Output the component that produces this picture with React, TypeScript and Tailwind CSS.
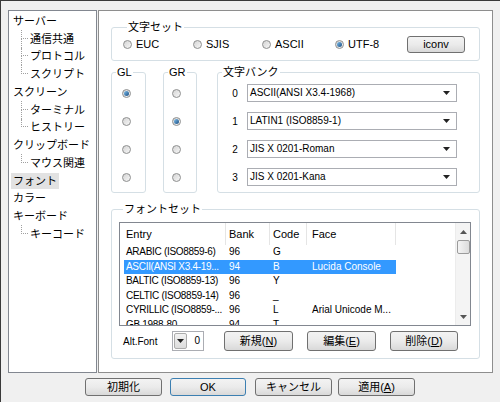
import React from "react";
import clsx from "clsx";

type TreeItem = { label: string; child?: boolean; last?: boolean; selected?: boolean };

const treeItems: TreeItem[] = [
  { label: "サーバー" },
  { label: "通信共通", child: true },
  { label: "プロトコル", child: true },
  { label: "スクリプト", child: true, last: true },
  { label: "スクリーン" },
  { label: "ターミナル", child: true },
  { label: "ヒストリー", child: true, last: true },
  { label: "クリップボード" },
  { label: "マウス関連", child: true, last: true },
  { label: "フォント", selected: true },
  { label: "カラー" },
  { label: "キーボード" },
  { label: "キーコード", child: true, last: true },
];

const banks = [
  "ASCII(ANSI X3.4-1968)",
  "LATIN1 (ISO8859-1)",
  "JIS X 0201-Roman",
  "JIS X 0201-Kana",
];

const fontRows = [
  { entry: "ARABIC (ISO8859-6)", bank: "96", code: "G", face: "" },
  { entry: "ASCII(ANSI X3.4-19...", bank: "94", code: "B", face: "Lucida Console", selected: true },
  { entry: "BALTIC (ISO8859-13)", bank: "96", code: "Y", face: "" },
  { entry: "CELTIC (ISO8859-14)", bank: "96", code: "_", face: "" },
  { entry: "CYRILLIC (ISO8859-...", bank: "96", code: "L", face: "Arial Unicode M..." },
  { entry: "GB 1988-80", bank: "94", code: "T", face: "" },
];

const Radio = ({ checked }: { checked?: boolean }) => (
  <span className="flex items-center justify-center w-[9px] h-[9px] shrink-0 rounded-full border border-[#8e8f8f] bg-linear-to-br from-[#d4d4d4] to-[#f7f7f7]">
    {checked && <span className="w-[5px] h-[5px] rounded-full bg-linear-to-br from-[#7fc0ee] to-[#1b4f82]" />}
  </span>
);

const Button = ({
  children,
  className,
  primary,
}: {
  children: React.ReactNode;
  className?: string;
  primary?: boolean;
}) => (
  <button
    className={clsx(
      "flex items-center justify-center rounded-[3px] border bg-linear-to-b from-[#f3f3f3] via-[#ebebeb] to-[#d9d9d9] text-[11px] leading-none text-black",
      primary ? "border-[#3c7fb1]" : "border-[#707070]",
      className
    )}
  >
    {children}
  </button>
);

const Arrow = () => (
  <svg width="7" height="4" viewBox="0 0 7 4">
    <path d="M0 0h7L3.5 4z" fill="#222" />
  </svg>
);

const App = () => {
  return (
    <div className="w-[500px] h-[402px] overflow-hidden bg-[#f0f0f0] border-t border-l border-[#3a3a3a] font-['Liberation_Sans','Noto_Sans_CJK_JP',sans-serif] text-[11px] text-black">
      <div className="flex pl-[7px] pt-[9px]">
        {/* Tree */}
        <div className="w-[89px] h-[363px] border border-[#828790] bg-white pt-[1px]">
          {treeItems.map((item) => (
            <div key={item.label} className="flex h-[17.75px] items-center">
              {item.child ? (
                <>
                  <div className="ml-[12px] w-[7px] self-stretch flex flex-col">
                    <div className="h-1/2 border-l border-b border-dotted border-[#a0a0a0]" />
                    <div className={clsx("h-1/2", !item.last && "border-l border-dotted border-[#a0a0a0]")} />
                  </div>
                  <span className="ml-[2px] leading-[14px] whitespace-nowrap">{item.label}</span>
                </>
              ) : (
                <span
                  className={clsx(
                    "ml-[2px] px-[2px] leading-[16px] whitespace-nowrap",
                    item.selected && "bg-[#e2e2e2]"
                  )}
                >
                  {item.label}
                </span>
              )}
            </div>
          ))}
        </div>

        {/* Panel */}
        <div className="ml-[1px] w-[395px] h-[363px] border border-[#8e8e8e] bg-white px-[12px] pt-[9px]">
          {/* 文字セット */}
          <fieldset className="border border-[#d5dfe5] rounded-[3px] pl-[11px] pt-[2px] pb-[7px]">
            <legend className="ml-[4px] px-[1px] leading-[14px]">文字セット</legend>
            <div className="flex h-[17px] items-center">
              <label className="flex w-[70px] items-center gap-[4px]">
                <Radio /> EUC
              </label>
              <label className="flex w-[69px] items-center gap-[4px]">
                <Radio /> SJIS
              </label>
              <label className="flex w-[73px] items-center gap-[4px]">
                <Radio /> ASCII
              </label>
              <label className="flex w-[72px] items-center gap-[4px]">
                <Radio checked /> UTF-8
              </label>
              <Button className="w-[58px] h-[17px]">iconv</Button>
            </div>
          </fieldset>

          {/* GL / GR / 文字バンク */}
          <div className="flex mt-[4px]">
            <fieldset className="w-[35px] border border-[#d5dfe5] rounded-[3px] pb-[1px]">
              <legend className="ml-[4px] px-[1px] leading-[14px]">GL</legend>
              {[0, 1, 2, 3].map((i) => (
                <div key={i} className="flex h-[28px] items-center pl-[10px]">
                  <Radio checked={i === 0} />
                </div>
              ))}
            </fieldset>
            <fieldset className="ml-[17px] w-[34px] border border-[#d5dfe5] rounded-[3px] pb-[1px]">
              <legend className="ml-[4px] px-[1px] leading-[14px]">GR</legend>
              {[0, 1, 2, 3].map((i) => (
                <div key={i} className="flex h-[28px] items-center pl-[8px]">
                  <Radio checked={i === 1} />
                </div>
              ))}
            </fieldset>
            <fieldset className="ml-[20px] w-[263px] border border-[#d5dfe5] rounded-[3px] pb-[1px]">
              <legend className="ml-[4px] px-[1px] leading-[14px]">文字バンク</legend>
              {banks.map((b, i) => (
                <div key={b} className="flex h-[28px] items-center">
                  <span className="ml-[14px] w-[6px] text-center text-[10px]">{i}</span>
                  <div className="ml-[9px] flex w-[210px] h-[18px] items-center justify-between border border-[#abadb3] bg-white pl-[2px] pr-[6px]">
                    <span className="whitespace-nowrap leading-none text-[10px]">{b}</span>
                    <Arrow />
                  </div>
                </div>
              ))}
            </fieldset>
          </div>

          {/* フォントセット */}
          <fieldset className="mt-[9px] border border-[#d5dfe5] rounded-[3px] pl-[7px] pt-[6px] pb-[7px]">
            <legend className="ml-[4px] px-[1px] leading-[14px]">フォントセット</legend>
            <div className="flex w-[352px] h-[104px] border border-[#828790] bg-white">
              <div className="flex-1 overflow-hidden pl-[4px]">
                <div className="flex h-[22px] items-center">
                  <div className="w-[102px] h-full flex items-center pl-[2px] border-r border-[#e5e5e5]">Entry</div>
                  <div className="w-[44px] h-full flex items-center pl-[3px] border-r border-[#e5e5e5]">Bank</div>
                  <div className="w-[37px] h-full flex items-center pl-[3px] border-r border-[#e5e5e5]">Code</div>
                  <div className="w-[89px] h-full flex items-center pl-[5px] border-r border-[#e5e5e5]">Face</div>
                </div>
                {fontRows.map((r) => (
                  <div
                    key={r.entry}
                    className={clsx(
                      "flex w-[272px] h-[14.5px] items-center text-[10px] leading-none whitespace-nowrap",
                      r.selected && "bg-[#3399ff] text-white"
                    )}
                  >
                    <span className="w-[102px] pl-[2px] tracking-[-0.3px] overflow-hidden">{r.entry}</span>
                    <span className="w-[44px] pl-[3px]">{r.bank}</span>
                    <span className="w-[37px] pl-[3px]">{r.code}</span>
                    <span className="w-[89px] pl-[5px] overflow-hidden">{r.face}</span>
                  </div>
                ))}
              </div>
              {/* scrollbar */}
              <div className="w-[15px] flex flex-col items-center bg-[#f4f4f4] border-l border-[#ececec]">
                <div className="h-[17px] flex items-center justify-center">
                  <svg width="7" height="4" viewBox="0 0 7 4">
                    <path d="M0 4h7L3.5 0z" fill="#555" />
                  </svg>
                </div>
                <div className="w-[13px] h-[14px] rounded-[2px] border border-[#9b9b9b] bg-linear-to-r from-[#f4f4f4] to-[#dcdcdc]" />
                <div className="flex-1" />
                <div className="h-[17px] flex items-center justify-center">
                  <svg width="7" height="4" viewBox="0 0 7 4">
                    <path d="M0 0h7L3.5 4z" fill="#555" />
                  </svg>
                </div>
              </div>
            </div>
            <div className="flex h-[20px] items-center mt-[5px]">
              <span className="ml-[4px] w-[49px] text-[10px]">Alt.Font</span>
              <div className="flex w-[32px] h-[20px] items-center border border-[#abadb3] bg-white">
                <div className="ml-[1px] w-[13px] h-[16px] flex items-center justify-center rounded-[2px] border border-[#acacac] bg-linear-to-b from-[#f2f2f2] to-[#dcdcdc]">
                  <Arrow />
                </div>
                <span className="flex-1 text-right pr-[3px] leading-none text-[10px]">0</span>
              </div>
              <Button className="ml-[20px] w-[69px] h-[20px]">
                新規(<u>N</u>)
              </Button>
              <Button className="ml-[14px] w-[69px] h-[20px]">
                編集(<u>E</u>)
              </Button>
              <Button className="ml-[14px] w-[68px] h-[20px]">
                削除(<u>D</u>)
              </Button>
            </div>
          </fieldset>
        </div>
      </div>

      {/* Bottom buttons */}
      <div className="flex mt-[5px] pl-[84px]">
        <Button className="w-[77px] h-[18px]">初期化</Button>
        <Button primary className="ml-[8px] w-[76px] h-[18px]">
          OK
        </Button>
        <Button className="ml-[9px] w-[77px] h-[18px]">キャンセル</Button>
        <Button className="ml-[6px] w-[77px] h-[18px]">
          適用(<u>A</u>)
        </Button>
      </div>
    </div>
  );
};

export default App;
